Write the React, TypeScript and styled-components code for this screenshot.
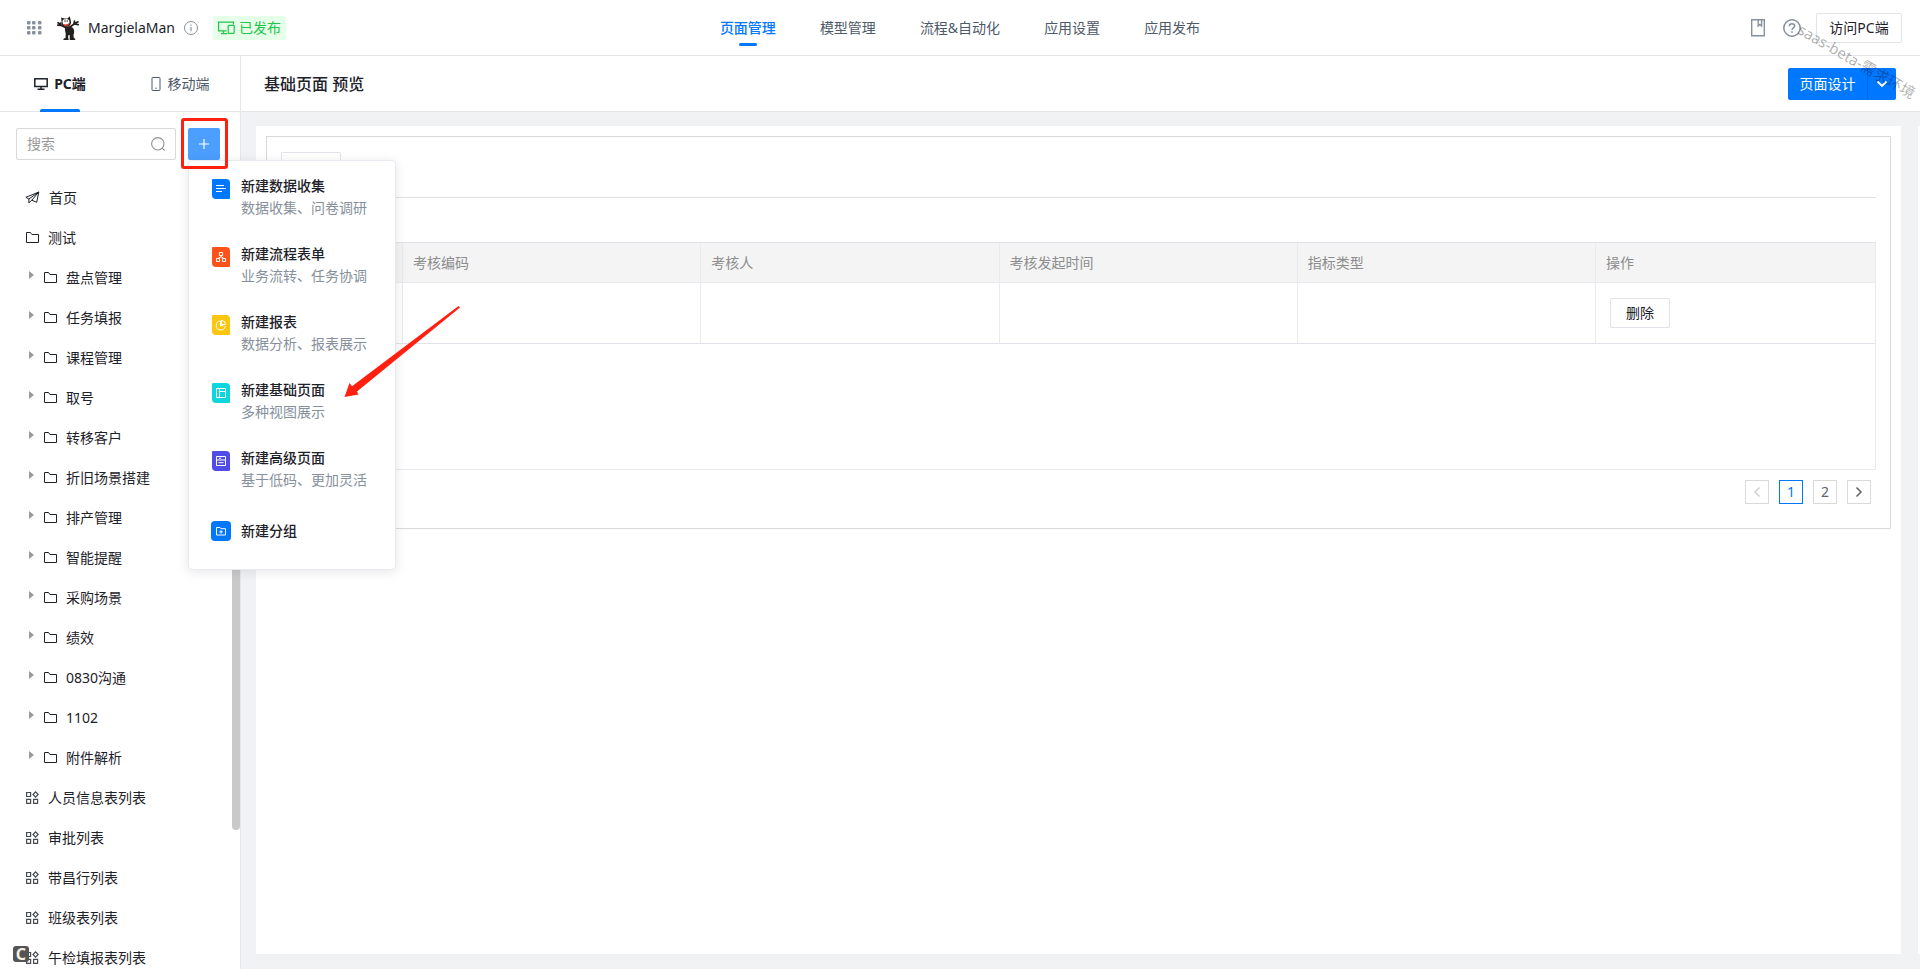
import React from "react";
import styled, { createGlobalStyle } from "styled-components";

const BLUE = "#0077ff";
const LINE = "#e4e6eb";
const INK = "#1d2129";

const GlobalStyle = createGlobalStyle`
  * { box-sizing: border-box; }
  body {
    margin: 0;
    color: ${INK};
    background: #fff;
    font: 14px/22px "Noto Sans", "Noto Sans CJK SC", sans-serif;
  }
  button, input { font: inherit; color: inherit; }
  button { cursor: pointer; }
  svg { display: block; flex: none; }
`;

const Shell = styled.div`
  display: flex;
  flex-direction: column;
  height: 100vh;
  overflow: hidden;
  position: relative;
`;

/* ---------- top bar ---------- */
const TopBar = styled.header`
  flex: none;
  display: grid;
  grid-template-columns: 1fr auto 1fr;
  height: 56px;
  border-bottom: 1px solid ${LINE};
`;

const Brand = styled.div`
  display: flex;
  align-items: center;
  padding-left: 27px;
`;

const Logo = styled.span`
  margin: 0 9px 0 15px;
`;

const AppName = styled.span`
  margin-right: 8px;
`;

const StatusTag = styled.span`
  display: flex;
  align-items: center;
  gap: 4px;
  height: 24px;
  margin-left: 14px;
  padding: 0 5px;
  border-radius: 2px;
  color: #22c44c;
  background: #e6ffe8;
`;

const Nav = styled.nav`
  display: flex;
  gap: 44px;
`;

const NavLink = styled.a<{ $active?: boolean }>`
  position: relative;
  display: flex;
  align-items: center;
  color: ${(p) => (p.$active ? BLUE : "#4e5969")};
  font-weight: ${(p) => (p.$active ? 500 : 400)};
  text-decoration: none;
  &::after {
    content: "";
    display: ${(p) => (p.$active ? "block" : "none")};
    position: absolute;
    left: 50%;
    bottom: 9px;
    width: 18px;
    height: 3px;
    margin-left: -9px;
    border-radius: 2px;
    background: ${BLUE};
  }
`;

const TopActions = styled.div`
  display: flex;
  align-items: center;
  justify-content: flex-end;
  gap: 15px;
  padding-right: 18px;
`;

const IconButton = styled.button`
  padding: 0;
  border: 0;
  background: none;
  color: #86909c;
`;

const OutlineButton = styled.button<{ $wide?: boolean }>`
  width: ${(p) => (p.$wide ? 86 : 60)}px;
  height: 30px;
  padding: 0;
  border: 1px solid #e1e3ea;
  border-radius: 2px;
  background: #fff;
`;

/* ---------- body ---------- */
const Body = styled.div`
  flex: 1;
  display: flex;
  min-height: 0;
`;

const Sidebar = styled.aside`
  flex: none;
  display: flex;
  flex-direction: column;
  width: 241px;
  border-right: 1px solid ${LINE};
  position: relative;
  z-index: 2;
`;

const Tabs = styled.div`
  flex: none;
  display: flex;
  height: 56px;
  border-bottom: 1px solid ${LINE};
`;

const Tab = styled.button<{ $active?: boolean }>`
  position: relative;
  flex: 1;
  display: flex;
  align-items: center;
  justify-content: center;
  gap: 6px;
  padding: 0;
  border: 0;
  background: none;
  color: ${(p) => (p.$active ? INK : "#4e5969")};
  font-weight: ${(p) => (p.$active ? 700 : 400)};
  &::after {
    content: "";
    display: ${(p) => (p.$active ? "block" : "none")};
    position: absolute;
    left: 40px;
    right: 40px;
    bottom: -1px;
    height: 3px;
    border-radius: 2px 2px 0 0;
    background: ${BLUE};
  }
`;

const SearchRow = styled.div`
  flex: none;
  display: flex;
  gap: 12px;
  padding: 16px 20px 16px 16px;
`;

const SearchBox = styled.label`
  flex: 1;
  min-width: 0;
  display: flex;
  align-items: center;
  height: 32px;
  padding: 0 10px;
  border: 1px solid #d9d9d9;
  border-radius: 2px;
  color: #8c8f94;
`;

const SearchInput = styled.input`
  flex: 1;
  min-width: 0;
  padding: 0;
  border: 0;
  outline: 0;
  background: none;
  &::placeholder { color: #999; opacity: 1; }
`;

const AddAnchor = styled.div`
  flex: none;
  position: relative;
`;

const AddButton = styled.button`
  display: flex;
  align-items: center;
  justify-content: center;
  width: 32px;
  height: 32px;
  padding: 0;
  border: 0;
  border-radius: 2px;
  color: #fff;
  background: #4c9fff;
`;

const Highlight = styled.span`
  position: absolute;
  left: -7px;
  top: -10px;
  width: 47px;
  height: 51px;
  border: 3px solid #ff2010;
  border-radius: 3px;
  pointer-events: none;
`;

const Arrow = styled.svg`
  position: absolute;
  left: 152px;
  top: 172px;
  pointer-events: none;
`;

const Menu = styled.ul`
  position: absolute;
  left: 0;
  top: 32px;
  width: 208px;
  margin: 0;
  padding: 2px 0 10px;
  list-style: none;
  border: 1px solid #e8eaf2;
  border-radius: 4px;
  background: #fff;
  box-shadow: 0 2px 12px rgba(0, 0, 0, 0.1);
`;

const MenuItem = styled.button`
  display: grid;
  grid-template-columns: 20px 1fr;
  column-gap: 10px;
  align-items: start;
  width: 100%;
  padding: 12px 0 12px 22px;
  border: 0;
  background: none;
  text-align: left;
`;

const MenuIcon = styled.span<{ $color: string; $group?: boolean }>`
  display: flex;
  align-items: center;
  justify-content: center;
  justify-self: center;
  align-self: ${(p) => (p.$group ? "center" : "start")};
  width: ${(p) => (p.$group ? 20 : 18)}px;
  height: 20px;
  margin-top: ${(p) => (p.$group ? 0 : 4)}px;
  border-radius: ${(p) => (p.$group ? "4px" : "1px 4px 1px 4px")};
  background: ${(p) => p.$color};
  color: #fff;
`;

const MenuText = styled.span<{ $group?: boolean }>`
  display: flex;
  flex-direction: column;
  font-weight: 500;
  padding: ${(p) => (p.$group ? "5px 0" : "0")};
`;

const MenuHint = styled.small`
  font-size: 14px;
  font-weight: 400;
  color: #86909c;
`;

const TreeWrap = styled.div`
  flex: 1;
  min-height: 0;
  position: relative;
  overflow: hidden;
  padding-top: 2px;
  z-index: -1;
`;

const Tree = styled.ul`
  margin: 0;
  padding: 0;
  list-style: none;
`;

const TreeLink = styled.a<{ $child?: boolean }>`
  display: flex;
  align-items: center;
  gap: 9px;
  height: 40px;
  padding-left: ${(p) => (p.$child ? 29 : 25)}px;
  color: ${INK};
  text-decoration: none;
`;

const Caret = styled.span`
  width: 5px;
  height: 8px;
  margin-bottom: 6px;
  background: #9a9a9a;
  clip-path: polygon(0 0, 100% 50%, 0 100%);
`;

const ScrollThumb = styled.span`
  position: absolute;
  top: 0;
  right: 0;
  width: 8px;
  height: 82.5%;
  border-radius: 4px;
  background: #c9c9c9;
`;

/* ---------- main column ---------- */
const Main = styled.main`
  flex: 1;
  min-width: 0;
  display: flex;
  flex-direction: column;
`;

const PageHead = styled.div`
  flex: none;
  display: flex;
  align-items: center;
  justify-content: space-between;
  height: 56px;
  padding: 0 24px 0 23px;
  border-bottom: 1px solid ${LINE};
`;

const PageTitle = styled.h1`
  margin: 0;
  font-size: 16px;
  line-height: 24px;
  font-weight: 500;
`;

const SplitButton = styled.div`
  display: flex;
  border-radius: 2px;
  overflow: hidden;
  background: ${BLUE};
`;

const SplitPart = styled.button<{ $arrow?: boolean }>`
  display: flex;
  align-items: center;
  justify-content: center;
  width: ${(p) => (p.$arrow ? 29 : 79)}px;
  height: 32px;
  padding: 0;
  border: 0;
  border-left: ${(p) => (p.$arrow ? "1px solid #0064e0" : "0")};
  background: none;
  color: #fff;
`;

const Canvas = styled.div`
  flex: 1;
  display: flex;
  gap: 17px;
  min-height: 0;
  padding: 14px 0 15px 15px;
  background: #f1f2f4;
`;

const Card = styled.section`
  flex: 1;
  min-width: 0;
  padding: 10px;
  background: #fff;
`;

const SidePanel = styled.div`
  flex: none;
  width: 2px;
  background: #fff;
`;

const Block = styled.div`
  padding: 15px 14px 24px;
  border: 1px solid #d9d9d9;
`;

const Toolbar = styled.div`
  display: flex;
  padding-bottom: 15px;
  margin-bottom: 44px;
  border-bottom: 1px solid #e0e0e4;
`;

const TableFrame = styled.div`
  min-height: 228px;
  border: 1px solid #e8eaf2;
  border-top-color: #e1e3ea;
`;

const Table = styled.table`
  width: 100%;
  table-layout: fixed;
  border-collapse: separate;
  border-spacing: 0;
`;

const HeadCell = styled.th`
  height: 40px;
  padding: 0 10px;
  border-bottom: 1px solid #e8eaf2;
  border-left: 1px solid #e8eaf2;
  background: #f4f4f5;
  color: #8c8c8c;
  font-weight: 400;
  text-align: left;
  &:first-child { border-left: 0; }
`;

const Cell = styled.td`
  height: 61px;
  padding: 0 14px;
  border-bottom: 1px solid #e1e3ea;
  border-left: 1px solid #e8eaf2;
  &:first-child { border-left: 0; }
  & > button { display: block; }
`;

const Pager = styled.nav`
  display: flex;
  justify-content: flex-end;
  gap: 10px;
  padding: 10px 5px 0 0;
`;

const PageButton = styled.button<{ $active?: boolean }>`
  display: flex;
  align-items: center;
  justify-content: center;
  width: 24px;
  height: 24px;
  padding: 0;
  border: 1px solid ${(p) => (p.$active ? BLUE : "#d9d9d9")};
  background: #fff;
  color: ${(p) => (p.$active ? BLUE : "#606266")};
  &:disabled { color: #d0d0d0; }
`;

/* ---------- floating marks ---------- */
const Watermark = styled.span`
  position: absolute;
  z-index: 4;
  right: -6px;
  top: 50px;
  width: 138px;
  font-size: 15px;
  text-align: center;
  white-space: nowrap;
  color: rgba(0, 0, 0, 0.32);
  transform: rotate(30deg);
  pointer-events: none;
`;

const CornerBadge = styled.span`
  position: absolute;
  z-index: 4;
  left: 13px;
  bottom: 7px;
  width: 16px;
  height: 16px;
  border-radius: 3px;
  background: #555;
  color: #f4f1e4;
  font: 700 16px/16px "Noto Sans", sans-serif;
  text-align: center;
`;

/* ---------- icons ---------- */
const GridDots = () => (
  <svg width="15" height="14" viewBox="0 0 15 14" fill="#86909c">
    {[0, 5, 10].map((y) =>
      [0, 5, 11].map((x) => <rect key={`${x}-${y}`} x={x} y={y} width="3.500" height="3.500" rx="1" />)
    )}
  </svg>
);

const CatLogo = () => (
  <svg width="22" height="24" viewBox="0 0 22 24">
    <path d="M4.500 6 4.200 1.500 7.500 2.600h3L12.800.3l1 4.500c.7 2.200-.2 4.400-2 5.500l-4.300.2C5.200 9.700 4 8 4.500 6Z" fill="#231f1e" />
    <path d="M5.500 6c-.2-2 1.200-3 2.800-2.600C10 2.500 12.500 3.500 12.500 6c0 2.200-1.500 3.500-3.500 3.500S5.600 8 5.500 6Z" fill="#fff" />
    <path d="M8 4.200v1.800M10.200 4.200v1.800" stroke="#231f1e" strokeWidth=".9" />
    <path d="M6.500 8c1.700.8 4 .5 5.800-.9-.3 2.300-1.900 3.500-3.500 3.500-1.200 0-2-1-2.300-2.600Z" fill="#e0352b" />
    <path d="M7.500 11 3.800 9.200 3.600 7M1 6.800l3 2M.8 9.200l3.200.2M13 11l4.500-3.300M17 7.500l.5-2.500M17.500 7.500 21 5.800M17.600 8l3.700.6" stroke="#231f1e" strokeWidth="1.700" fill="none" strokeLinecap="round" />
    <path d="M7.500 10.500c3-.5 6.500-.5 8.500 1.500 1.500 2 1.500 4.500.5 6.500l.2 3 1.500 1.500v1h-5.500v-5l-1.500.2v2.800l.6 2H6.300c0-1.300 1-2 2.200-2l.2-4.500C8 15 8 12.500 7.500 10.500Z" fill="#231f1e" />
  </svg>
);

const InfoIcon = () => (
  <svg width="16" height="16" viewBox="0 0 16 16" fill="none" stroke="#86909c">
    <circle cx="8" cy="8" r="6.500" />
    <path d="M8 7v4.200M8 4.400v1.400" strokeWidth="1.200" />
  </svg>
);

const DevicesIcon = () => (
  <svg width="17" height="14" viewBox="0 0 17 14" fill="none" stroke="currentColor" strokeWidth="1.200">
    <path d="M8.500 9.800H.6V1.200h14.800v2.300M3 12.600h6.500M5.500 10v2.500" />
    <rect x="10.200" y="4.400" width="6" height="8" rx=".8" />
  </svg>
);

const BookIcon = () => (
  <svg width="17" height="18" viewBox="0 0 17 18" fill="none" stroke="currentColor" strokeWidth="1.400">
    <path d="M.7.8h12.600v16H.7zM7.200 1v6l1.700-1.500L10.600 7V1" />
  </svg>
);

const HelpIcon = () => (
  <svg width="18" height="18" viewBox="0 0 18 18" fill="none" stroke="currentColor" strokeWidth="1.500">
    <circle cx="9" cy="9" r="8.200" />
    <path d="M6.300 7.200C6.300 5.600 7.500 4.700 9 4.700s2.700.9 2.700 2.300c0 1.900-2.600 1.900-2.700 3.900" />
    <path d="M9 12.200v1.500" />
  </svg>
);

const MonitorIcon = () => (
  <svg width="14" height="12" viewBox="0 0 14 12" fill="none" stroke="currentColor" strokeWidth="1.500">
    <rect x=".8" y=".8" width="12.400" height="7.700" />
    <path d="M7 8.500v2.500M3.500 11.200h7" />
  </svg>
);

const PhoneIcon = () => (
  <svg width="11" height="14" viewBox="0 0 11 14" fill="none" stroke="currentColor">
    <rect x="1" y=".5" width="8" height="13" rx=".6" />
    <path d="M4.300 11.200h1.500" />
  </svg>
);

const SearchIcon = () => (
  <svg width="14" height="14" viewBox="0 0 14 14" fill="none" stroke="currentColor" strokeWidth="1.100">
    <circle cx="6.800" cy="6.800" r="6.200" />
    <path d="m11.200 11.200 2.400 2.400" />
  </svg>
);

const PlusIcon = () => (
  <svg width="10" height="10" viewBox="0 0 10 10" stroke="currentColor" strokeWidth="1.200">
    <path d="M5 0v10M0 5h10" />
  </svg>
);

const PlaneIcon = () => (
  <svg width="15" height="14" viewBox="0 0 15 14" fill="none" stroke="currentColor" strokeLinejoin="round">
    <path d="M13.800 1 .9 6.300l3 1.700L13.800 1 11.700 11.300 6.800 9.200M3.900 8v3.900l2.900-2.700L13.800 1" />
  </svg>
);

const FolderIcon = () => (
  <svg width="14" height="12" viewBox="0 0 14 12" fill="none" stroke="currentColor">
    <path d="M1.500.5h4l1.400 2h6.600v8h-12z" />
  </svg>
);

const WidgetIcon = () => (
  <svg width="14" height="14" viewBox="0 0 14 14" fill="none" stroke="#454a52" strokeWidth="1.200">
    <path d="M1.600 1.500h4v4h-4zM1.600 8.300h4v4h-4zM8.600 8.300h4v4h-4zM10.600.9l2.600 2.600-2.600 2.600L8 3.500z" />
  </svg>
);

const Chevron = ({ d, w = 1.5 }: { d: string; w?: number }) => (
  <svg width="12" height="12" viewBox="0 0 12 12" fill="none" stroke="currentColor" strokeWidth={w}>
    <path d={d} />
  </svg>
);

const glyphs: Record<string, string> = {
  lines: "M1 2.500h8M1 5.500h10M1 8.500h6",
  flow: "M4.400 1.500h3.200v3H4.400zM1.500 7.500h3v3h-3zM7.500 7.500h3v3h-3zM6 4.500v1.400M3 7.500 6 5.700l3 1.800",
  pie: "M5.500 2a4.500 4.500 0 1 0 4.700 5M6.500 1.500v4h4a4 4 0 0 0-4-4ZM5.500 2v5l3-1",
  page: "M1.500 1.500h9v9h-9zM4.500 1.500v9M4.500 4.500h6",
  form: "M1.500 1.500h9v9h-9zM1.500 5h9M4 3.300h2M3.500 7.700h5",
  group: "M1.500 2.500H5l1 1.200h4.500v6.300h-9zM6 5.200v3.400M4.300 6.900h3.400",
};

const Glyph = ({ name }: { name: string }) => (
  <svg width="12" height="12" viewBox="0 0 12 12" fill="none" stroke="currentColor" strokeWidth="1">
    <path d={glyphs[name]} />
  </svg>
);

/* ---------- data ---------- */
const navItems = ["页面管理", "模型管理", "流程&自动化", "应用设置", "应用发布"];
const menuItems = [
  { icon: "lines", color: "#0077ff", title: "新建数据收集", hint: "数据收集、问卷调研" },
  { icon: "flow", color: "#ff5219", title: "新建流程表单", hint: "业务流转、任务协调" },
  { icon: "pie", color: "#fac60f", title: "新建报表", hint: "数据分析、报表展示" },
  { icon: "page", color: "#0fd6dc", title: "新建基础页面", hint: "多种视图展示" },
  { icon: "form", color: "#4f4ce8", title: "新建高级页面", hint: "基于低码、更加灵活" },
  { icon: "group", color: "#0077ff", title: "新建分组" },
];
const folders = [
  "盘点管理", "任务填报", "课程管理", "取号", "转移客户", "折旧场景搭建", "排产管理",
  "智能提醒", "采购场景", "绩效", "0830沟通", "1102", "附件解析",
];
const pages = ["人员信息表列表", "审批列表", "带昌行列表", "班级表列表", "午检填报表列表"];
const columns = ["", "考核编码", "考核人", "考核发起时间", "指标类型", "操作"];

export default function App() {
  return (
    <Shell>
      <GlobalStyle />
      <TopBar>
        <Brand>
          <GridDots />
          <Logo><CatLogo /></Logo>
          <AppName>MargielaMan</AppName>
          <InfoIcon />
          <StatusTag><DevicesIcon />已发布</StatusTag>
        </Brand>
        <Nav>
          {navItems.map((n, i) => (
            <NavLink key={n} href="#" $active={i === 0}>{n}</NavLink>
          ))}
        </Nav>
        <TopActions>
          <IconButton aria-label="文档"><BookIcon /></IconButton>
          <IconButton aria-label="帮助"><HelpIcon /></IconButton>
          <OutlineButton $wide>访问PC端</OutlineButton>
        </TopActions>
      </TopBar>

      <Body>
        <Sidebar>
          <Tabs>
            <Tab $active><MonitorIcon />PC端</Tab>
            <Tab><PhoneIcon />移动端</Tab>
          </Tabs>
          <SearchRow>
            <SearchBox>
              <SearchInput placeholder="搜索" aria-label="搜索" />
              <SearchIcon />
            </SearchBox>
            <AddAnchor>
              <AddButton aria-label="新建"><PlusIcon /></AddButton>
              <Menu>
                {menuItems.map((m) => (
                  <li key={m.title}>
                    <MenuItem>
                      <MenuIcon $color={m.color} $group={!m.hint}><Glyph name={m.icon} /></MenuIcon>
                      <MenuText $group={!m.hint}>
                        {m.title}
                        {m.hint && <MenuHint>{m.hint}</MenuHint>}
                      </MenuText>
                    </MenuItem>
                  </li>
                ))}
              </Menu>
              <Highlight />
              <Arrow width="124" height="100" viewBox="0 0 124 100">
                <path d="M4.500 97 9.500 83l2.500 3.200L118.500 6l1.500 1.500L17 91.500l1.500 3Z" fill="#ff2010" />
              </Arrow>
            </AddAnchor>
          </SearchRow>
          <TreeWrap>
            <Tree>
              <li><TreeLink href="#"><PlaneIcon />首页</TreeLink></li>
              <li>
                <TreeLink href="#"><FolderIcon />测试</TreeLink>
                <Tree>
                  {folders.map((f) => (
                    <li key={f}><TreeLink href="#" $child><Caret /><FolderIcon />{f}</TreeLink></li>
                  ))}
                </Tree>
              </li>
              {pages.map((p) => (
                <li key={p}><TreeLink href="#"><WidgetIcon />{p}</TreeLink></li>
              ))}
            </Tree>
            <ScrollThumb />
          </TreeWrap>
        </Sidebar>

        <Main>
          <PageHead>
            <PageTitle>基础页面 预览</PageTitle>
            <SplitButton>
              <SplitPart>页面设计</SplitPart>
              <SplitPart $arrow aria-label="更多"><Chevron d="m1.500 3.500 4.500 4.500 4.500-4.500" w={1.8} /></SplitPart>
            </SplitButton>
          </PageHead>
          <Canvas>
            <Card>
              <Block>
                <Toolbar><OutlineButton aria-label="新增" /></Toolbar>
                <TableFrame>
                  <Table>
                    <colgroup>
                      <col width="120" /><col /><col /><col /><col /><col width="280" />
                    </colgroup>
                    <thead>
                      <tr>{columns.map((c) => <HeadCell key={c}>{c}</HeadCell>)}</tr>
                    </thead>
                    <tbody>
                      <tr>
                        <Cell /><Cell /><Cell /><Cell /><Cell />
                        <Cell><OutlineButton>删除</OutlineButton></Cell>
                      </tr>
                    </tbody>
                  </Table>
                </TableFrame>
                <Pager>
                  <PageButton disabled aria-label="上一页"><Chevron d="M8.500 1.500 4 6l4.500 4.500" /></PageButton>
                  <PageButton $active>1</PageButton>
                  <PageButton>2</PageButton>
                  <PageButton aria-label="下一页"><Chevron d="M3.500 1.500 8 6l-4.500 4.500" /></PageButton>
                </Pager>
              </Block>
            </Card>
            <SidePanel />
          </Canvas>
        </Main>
      </Body>
      <Watermark>saas-beta-需求环境</Watermark>
      <CornerBadge>C</CornerBadge>
    </Shell>
  );
}
